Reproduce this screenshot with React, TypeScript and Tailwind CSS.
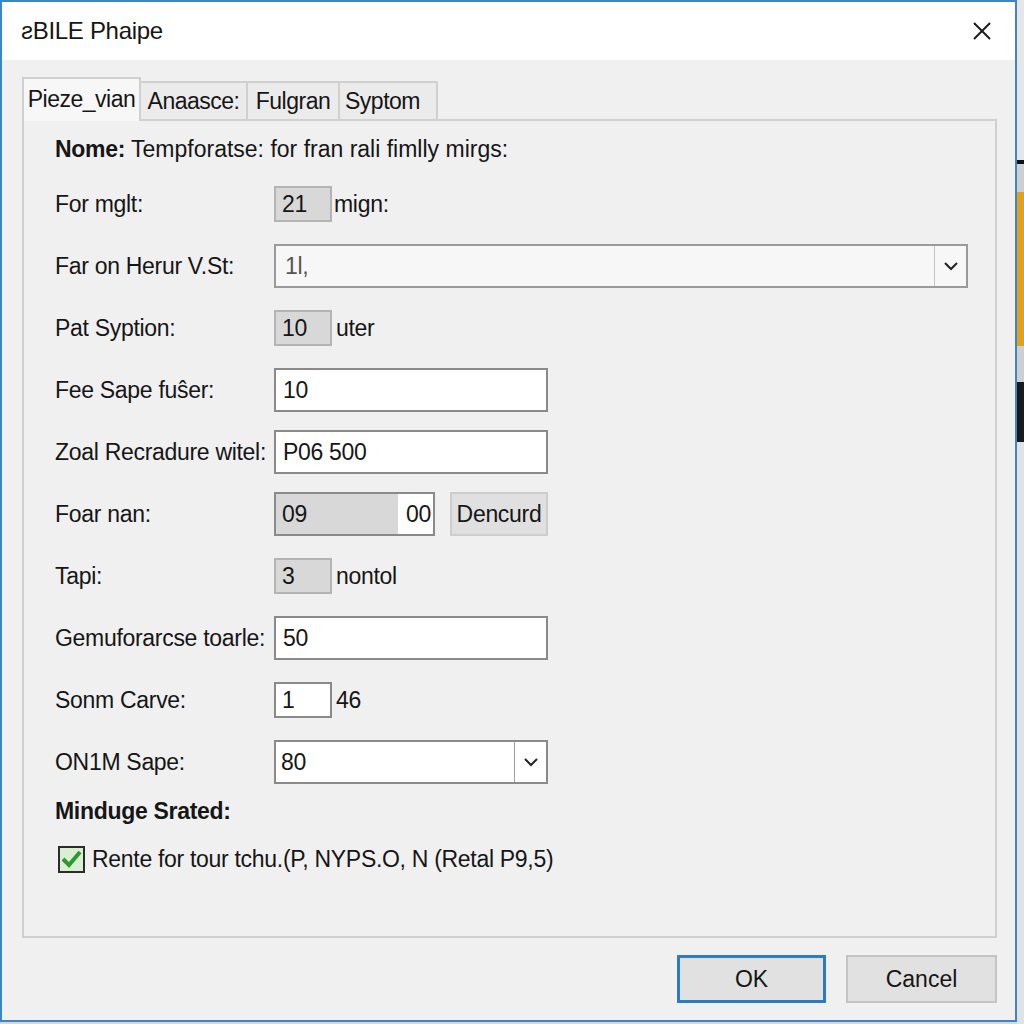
import { X } from "lucide-react"

const font = { fontFamily: '"Liberation Sans", Arial, sans-serif' }

function Chevron() {
  return (
    <svg width="16" height="10" viewBox="0 0 16 10" fill="none">
      <path d="M2 2 L8 8 L14 2" stroke="#222" strokeWidth="2" />
    </svg>
  )
}

function SmallBox({ value, white }: { value: string; white?: boolean }) {
  return (
    <div
      className={`w-[58px] h-[36px] flex items-center pl-[6px] border-2 ${
        white ? "bg-white border-[#8a8a8a]" : "bg-[#d8d8d8] border-[#b4b4b4]"
      }`}
    >
      {value}
    </div>
  )
}

function TextBox({ value }: { value: string }) {
  return (
    <div className="w-[274px] h-[44px] flex items-center pl-[7px] bg-white border-2 border-[#8a8a8a]">
      {value}
    </div>
  )
}

function Row({ label, children }: { label: string; children: React.ReactNode }) {
  return (
    <div className="h-[62px] flex items-center">
      <div className="w-[219px] shrink-0 whitespace-nowrap">{label}</div>
      {children}
    </div>
  )
}

export default function App() {
  return (
    <div className="flex w-[1024px] h-[1024px] bg-[#d8d8d8] text-[#161616]" style={font}>
      {/* Window */}
      <div className="w-[1017px] h-[1022px] border-2 border-[#3d86c6] bg-[#f0f0f0] flex flex-col">
        {/* Title bar */}
        <div className="h-[58px] bg-white flex items-center justify-between pl-[19px] pr-[18px] shrink-0">
          <span className="text-[24px] tracking-[-0.3px]">ƨBILE Phaipe</span>
          <X className="w-[30px] h-[30px] text-[#1a1a1a]" strokeWidth={1.5} />
        </div>

        <div className="flex-1 flex flex-col pl-[20px] pr-[18px]">
          {/* Tabs */}
          <div className="flex items-end h-[59px] text-[23px] tracking-[-0.5px] relative z-10">
            <div className="h-[44px] w-[119px] justify-center flex items-center border-2 border-b-0 border-[#d0d0d0] bg-[#f7f7f7] -mb-[2px] pb-[2px]">
              Pieze_vian
            </div>
            <div className="h-[38px] w-[107px] justify-center flex items-center border-2 border-l-0 border-b-0 border-[#d0d0d0] bg-[#ebebeb]">
              Anaasce:
            </div>
            <div className="h-[38px] w-[92px] justify-center flex items-center border-2 border-l-0 border-b-0 border-[#d0d0d0] bg-[#ebebeb]">
              Fulgran
            </div>
            <div className="h-[38px] w-[98px] px-[5px] flex items-center border-2 border-l-0 border-b-0 border-[#d0d0d0] bg-[#ebebeb]">
              Syptom
            </div>
          </div>

          {/* Panel */}
          <div className="h-[819px] border-2 border-[#d0d0d0] bg-[#f0f0f0] pl-[31px] text-[23px] tracking-[-0.3px]">
            <div className="h-[52px] flex items-end pb-[7px] whitespace-nowrap">
              <span className="font-bold mr-[6px]">Nome:</span>
              <span className="tracking-[0px]">Tempforatse: for fran rali fimlly mirgs:</span>
            </div>

            <Row label="For mglt:">
              <SmallBox value="21" />
              <span className="ml-[2px]">mign:</span>
            </Row>

            <Row label="Far on Herur V.St:">
              <div className="w-[694px] h-[44px] flex bg-[#f7f7f7] border-2 border-[#9a9a9a]">
                <div className="flex-1 flex items-center pl-[9px] text-[#555]">1l,</div>
                <div className="w-[32px] flex items-center justify-center border-l border-[#c4c4c4]">
                  <Chevron />
                </div>
              </div>
            </Row>

            <Row label="Pat Syption:">
              <SmallBox value="10" />
              <span className="ml-[4px]">uter</span>
            </Row>

            <Row label="Fee Sape fuŝer:">
              <TextBox value="10" />
            </Row>

            <Row label="Zoal Recradure witel:">
              <TextBox value="P06 500" />
            </Row>

            <Row label="Foar nan:">
              <div className="w-[161px] h-[44px] flex border-2 border-[#8a8a8a]">
                <div className="w-[122px] bg-[#d8d8d8] flex items-center pl-[6px]">09</div>
                <div className="flex-1 bg-white flex items-center justify-end pr-[2px]">00</div>
              </div>
              <div className="ml-[15px] w-[98px] h-[44px] flex items-center justify-center bg-[#e0e0e0] border-2 border-[#cdcdcd]">
                Dencurd
              </div>
            </Row>

            <Row label="Tapi:">
              <SmallBox value="3" />
              <span className="ml-[4px]">nontol</span>
            </Row>

            <Row label="Gemuforarcse toarle:">
              <TextBox value="50" />
            </Row>

            <Row label="Sonm Carve:">
              <SmallBox value="1" white />
              <span className="ml-[4px]">46</span>
            </Row>

            <Row label="ON1M Sape:">
              <div className="w-[274px] h-[44px] flex bg-white border-2 border-[#8a8a8a]">
                <div className="flex-1 flex items-center pl-[5px]">80</div>
                <div className="w-[32px] flex items-center justify-center border-l border-[#a0a0a0]">
                  <Chevron />
                </div>
              </div>
            </Row>

            <div className="h-[36px] flex items-center font-bold">Minduge Srated:</div>

            <div className="h-[60px] flex items-center pl-[3px] whitespace-nowrap">
              <svg width="27" height="27" viewBox="0 0 27 27" className="shrink-0">
                <rect x="1" y="1" width="25" height="25" fill="#d9efd4" stroke="#2b2b2b" strokeWidth="2" />
                <path d="M5 13 L11 19 L22 6" stroke="#2e9a2e" strokeWidth="4" fill="none" />
              </svg>
              <span className="ml-[7px]">Rente for tour tchu.(P, NYPS.O, N (Retal P9,5)</span>
            </div>
          </div>

          {/* Buttons */}
          <div className="flex justify-end gap-[20px] pt-[17px] text-[23px]">
            <div className="w-[149px] h-[48px] flex items-center justify-center bg-[#e1e1e1] border-[3px] border-[#2b7bc6]">
              OK
            </div>
            <div className="w-[151px] h-[48px] flex items-center justify-center bg-[#e1e1e1] border-2 border-[#c4c4c4]">
              Cancel
            </div>
          </div>
        </div>
      </div>

      {/* Edge of app behind */}
      <div className="flex-1 flex flex-col">
        <div className="h-[160px] bg-[#e6e6e6]" />
        <div className="h-[4px] bg-[#111]" />
        <div className="h-[28px] bg-[#cfcfcf]" />
        <div className="h-[154px] bg-[#e4a019]" />
        <div className="h-[36px] bg-[#cfcfcf]" />
        <div className="h-[60px] bg-[#1a1a1a]" />
        <div className="flex-1 bg-[#e2e2e2]" />
      </div>
    </div>
  )
}
